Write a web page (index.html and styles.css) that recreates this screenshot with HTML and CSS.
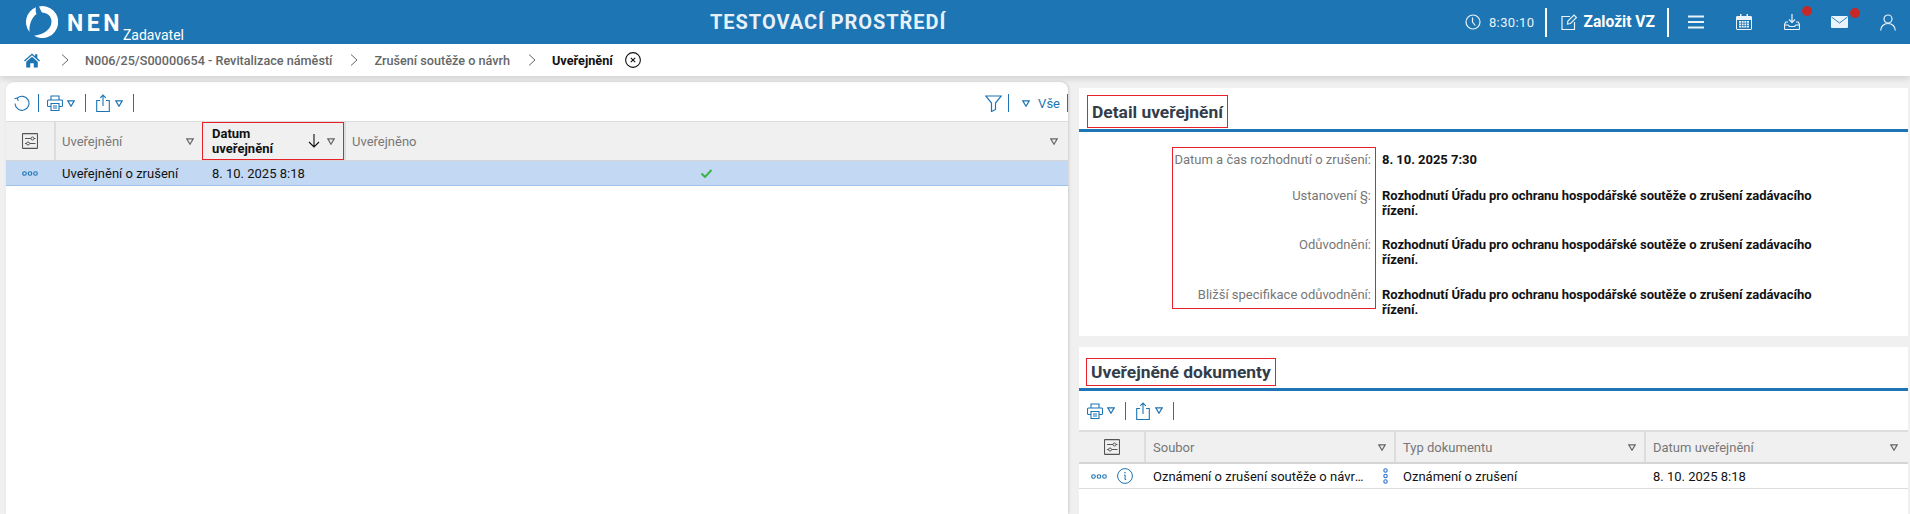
FILE: index.html
```html
<!DOCTYPE html>
<html lang="cs">
<head>
<meta charset="utf-8">
<title>NEN</title>
<link rel="stylesheet" href="styles.css">
</head>
<body>
<svg class="defs" width="0" height="0" aria-hidden="true">
  <defs>
    <symbol id="tri" viewBox="0 0 8 7"><path d="M.8.8h6.400L4 6.200z" fill="none" stroke="currentColor" stroke-width="1.200"/></symbol>
    <symbol id="printer" viewBox="0 0 16 16"><path d="M4 5V1h8v4M4 11.500H1.500a1 1 0 0 1-1-1V6a1 1 0 0 1 1-1h13a1 1 0 0 1 1 1v4.500a1 1 0 0 1-1 1H12M4 8.500h8V15.500H4zM6 11h4M6 13h4" fill="none" stroke="currentColor" stroke-width="1.100"/></symbol>
    <symbol id="share" viewBox="0 0 14 18"><path d="M4 6.500H.7v11h12.600v-11H10M7 12V1M4.200 3.800 7 1l2.800 2.800" fill="none" stroke="currentColor" stroke-width="1.100"/></symbol>
    <symbol id="settings" viewBox="0 0 16 16"><path d="M1 .6h14a.5.5 0 0 1 .5.500v13.800a.5.5 0 0 1-.5.500H1a.5.5 0 0 1-.5-.5V1.100A.5.5 0 0 1 1 .6zM3 5.500h6M12 5.500h1.500M3 10.500h1.500M8 10.500h5.500" fill="none" stroke="currentColor" stroke-width="1.100"/><circle cx="10.500" cy="5.500" r="1.500" fill="none" stroke="currentColor"/><circle cx="6" cy="10.500" r="1.500" fill="none" stroke="currentColor"/></symbol>
    <symbol id="dots" viewBox="0 0 16 5"><g fill="none" stroke="currentColor" stroke-width="1.100"><circle cx="2.500" cy="2.500" r="1.800"/><circle cx="8" cy="2.500" r="1.800"/><circle cx="13.500" cy="2.500" r="1.800"/></g></symbol>
    <symbol id="chev" viewBox="0 0 8 12"><path d="M1 .5 7 6l-6 5.500" fill="none" stroke="currentColor" stroke-width="1"/></symbol>
  </defs>
</svg>

<header class="topbar">
  <div class="brand">
    <svg class="logo" viewBox="0 0 32 32" aria-hidden="true">
      <path d="M13 .4A16 16 0 1 1 8 29.800C15 29 25 25 25.500 16 25.500 10 21 6.500 16 6.500 14.500 4 13.800 2 13 .4z" fill="#fff"/>
      <path d="M10 1.200A16 16 0 0 0 3.500 26C3 20 5 12 10.500 8 9.500 6 9.500 3 10 1.200z" fill="#fff"/>
    </svg>
    <span class="brand-name">NEN</span>
    <span class="brand-role">Zadavatel</span>
  </div>
  <div class="env">TESTOVACÍ PROSTŘEDÍ</div>
  <div class="top-tools">
    <svg class="ico-clock" viewBox="0 0 16 16" aria-hidden="true"><circle cx="8" cy="8" r="7" fill="none" stroke="currentColor" stroke-width="1.200"/><path d="M7.500 3.500V8l2.800 3.500" fill="none" stroke="currentColor" stroke-width="1.200"/></svg>
    <span class="clock">8:30:10</span>
    <span class="top-sep sep-left"></span>
    <svg class="ico-edit" viewBox="0 0 16 16" aria-hidden="true"><path d="M9 2.500H1v13h12.500V8M6.500 10l.4-3L13 1l2.500 2.500L9.500 9.500z" fill="none" stroke="currentColor" stroke-width="1.200"/></svg>
    <span class="found">Založit VZ</span>
    <span class="top-sep sep-right"></span>
    <svg class="ico-burger" viewBox="0 0 16 14" aria-hidden="true"><path d="M0 1.500h16M0 7h16M0 12.500h16" stroke="currentColor" stroke-width="2"/></svg>
    <svg class="ico-cal" viewBox="0 0 16 16" aria-hidden="true"><path d="M1 2.500h14a.5.5 0 0 1 .5.500v12a.5.5 0 0 1-.5.500H1a.5.5 0 0 1-.5-.5V3A.5.5 0 0 1 1 2.500z" fill="none" stroke="currentColor"/><path d="M.5 2.500h15V6H.5zM4 0h1.500v3H4zM10.500 0H12v3h-1.500z" fill="currentColor"/><path d="M3 7h10v6.500H3z" fill="currentColor"/><path d="M5.500 7v6.500M8 7v6.500M10.500 7v6.500M3 9.200h10M3 11.400h10" stroke="#1d75b4" stroke-width=".7"/></svg>
    <span class="notif">
      <svg class="ico-inbox" viewBox="0 0 16 16" aria-hidden="true"><path d="M8 0v8M5 5.500 8 8.500l3-3M4 8H1.700L.5 10.500v4a1 1 0 0 0 1 1h13a1 1 0 0 0 1-1v-4L14.300 8H12M.5 11h3.500l1.500 1.500h5L12 11h3.500" fill="none" stroke="currentColor" stroke-width="1.200"/></svg>
      <span class="dot"></span>
    </span>
    <span class="notif notif-mail">
      <svg class="ico-mail" viewBox="0 0 17 12" aria-hidden="true"><rect width="17" height="12" rx="1" fill="currentColor"/><path d="M.5 1 8.500 7 16.500 1" fill="none" stroke="#1d75b4" stroke-width=".9"/></svg>
      <span class="dot"></span>
    </span>
    <svg class="ico-user" viewBox="0 0 16 17" aria-hidden="true"><circle cx="8" cy="5" r="4" fill="none" stroke="currentColor" stroke-width="1.200"/><path d="M.7 16.500c0-4 3-7 7.300-7s7.300 3 7.300 7" fill="none" stroke="currentColor" stroke-width="1.200"/></svg>
  </div>
</header>

<nav class="crumbs">
  <svg class="home" viewBox="0 0 18 16" aria-hidden="true"><path d="M9 0 0 8l1 1 8-7 8 7 1-1-3-2.700V1h-2.500v2.100z" fill="#1d75b4"/><path d="M2.500 9.500 9 3.800l6.500 5.700V16H11v-5H7v5H2.500z" fill="#1d75b4"/></svg>
  <svg class="chev chev-first"><use href="#chev"/></svg>
  <a class="crumb">N006/25/S00000654 - Revitalizace náměstí</a>
  <svg class="chev"><use href="#chev"/></svg>
  <a class="crumb">Zrušení soutěže o návrh</a>
  <svg class="chev"><use href="#chev"/></svg>
  <strong class="crumb-now">Uveřejnění</strong>
  <svg class="close" viewBox="0 0 16 16" aria-hidden="true"><circle cx="8" cy="8" r="7.400" fill="none" stroke="#111" stroke-width="1.100"/><path d="m5.800 5.800 4.400 4.400m0-4.400-4.400 4.400" stroke="#111" stroke-width="1.100"/></svg>
</nav>

<main class="page">
  <section class="left">
    <div class="toolbar toolbar-left">
      <svg class="t-refresh" viewBox="0 0 16 16" aria-hidden="true"><path d="M3.200 3.200A7 7 0 1 1 1 8.500M.5 3.800l2.800-.8 1 2.900" fill="none" stroke="currentColor" stroke-width="1.100"/></svg>
      <span class="t-sep"></span>
      <svg class="t-print"><use href="#printer"/></svg>
      <svg class="tri"><use href="#tri"/></svg>
      <span class="t-sep"></span>
      <svg class="t-share"><use href="#share"/></svg>
      <svg class="tri"><use href="#tri"/></svg>
      <span class="t-sep"></span>
      <span class="spacer"></span>
      <svg class="t-filter" viewBox="0 0 17 17" aria-hidden="true"><path d="M.7 1h15.600l-5.800 7v6.500l-4 2V8z" fill="none" stroke="currentColor" stroke-width="1.200"/></svg>
      <span class="t-sep"></span>
      <svg class="tri tri-all"><use href="#tri"/></svg>
      <span class="all">Vše</span>
      <span class="t-sep"></span>
    </div>
    <div class="thead thead-left">
      <div class="th th-icon"><svg class="settings"><use href="#settings"/></svg></div>
      <div class="th"><span>Uveřejnění</span><svg class="tri th-tri"><use href="#tri"/></svg></div>
      <div class="th th-sorted">
        <span class="sorted-label">Datum<br>uveřejnění</span>
        <svg class="sort" viewBox="0 0 12 14" aria-hidden="true"><path d="M6 0v13M1 8l5 5 5-5" fill="none" stroke="#111" stroke-width="1.100"/></svg>
        <svg class="tri th-tri-sorted"><use href="#tri"/></svg>
      </div>
      <div class="th th-last"><span>Uveřejněno</span><svg class="tri th-tri"><use href="#tri"/></svg></div>
    </div>
    <div class="row row-left">
      <div class="cell cell-dots"><svg class="dots"><use href="#dots"/></svg></div>
      <div class="cell">Uveřejnění o zrušení</div>
      <div class="cell">8. 10. 2025 8:18</div>
      <div class="cell cell-check"><svg class="check" viewBox="0 0 11 9" aria-hidden="true"><path d="M.5 4.500 4 8l6.500-7" fill="none" stroke="#3bb54a" stroke-width="2"/></svg></div>
    </div>
  </section>

  <div class="right">
    <section class="card card-detail">
      <div class="card-head"><h2 class="card-title">Detail uveřejnění</h2></div>
      <div class="form">
        <div class="form-mark"></div>
        <div class="f-label">Datum a čas rozhodnutí o zrušení:</div>
        <div class="f-value">8. 10. 2025 7:30</div>
        <div class="f-label">Ustanovení §:</div>
        <div class="f-value">Rozhodnutí Úřadu pro ochranu hospodářské soutěže o zrušení zadávacího řízení.</div>
        <div class="f-label">Odůvodnění:</div>
        <div class="f-value">Rozhodnutí Úřadu pro ochranu hospodářské soutěže o zrušení zadávacího řízení.</div>
        <div class="f-label">Bližší specifikace odůvodnění:</div>
        <div class="f-value">Rozhodnutí Úřadu pro ochranu hospodářské soutěže o zrušení zadávacího řízení.</div>
      </div>
    </section>

    <section class="card card-docs">
      <div class="card-head card-head-docs"><h2 class="card-title title-docs">Uveřejněné dokumenty</h2></div>
      <div class="toolbar toolbar-docs">
        <svg class="t-print"><use href="#printer"/></svg>
        <svg class="tri"><use href="#tri"/></svg>
        <span class="t-sep"></span>
        <svg class="t-share"><use href="#share"/></svg>
        <svg class="tri"><use href="#tri"/></svg>
        <span class="t-sep"></span>
      </div>
      <div class="thead thead-docs">
        <div class="th th-icon"><svg class="settings"><use href="#settings"/></svg></div>
        <div class="th"><span>Soubor</span><svg class="tri th-tri"><use href="#tri"/></svg></div>
        <div class="th"><span>Typ dokumentu</span><svg class="tri th-tri"><use href="#tri"/></svg></div>
        <div class="th th-last"><span>Datum uveřejnění</span><svg class="tri th-tri"><use href="#tri"/></svg></div>
      </div>
      <div class="row row-docs">
        <div class="cell cell-actions">
          <svg class="dots"><use href="#dots"/></svg>
          <svg class="info" viewBox="0 0 16 16" aria-hidden="true"><circle cx="8" cy="8" r="7.400" fill="none" stroke="currentColor" stroke-width="1"/><circle cx="8" cy="4.800" r=".8" fill="currentColor"/><path d="M7 7.200h1.200L8 11.500h1.200" fill="none" stroke="currentColor" stroke-width="1"/></svg>
        </div>
        <div class="cell cell-file"><span class="file-name">Oznámení o zrušení soutěže o návrhu</span><svg class="kebab" viewBox="0 0 5 16" aria-hidden="true"><g fill="none" stroke="#2f74c9" stroke-width="1.100"><circle cx="2.500" cy="2.500" r="1.700"/><circle cx="2.500" cy="8" r="1.700"/><circle cx="2.500" cy="13.500" r="1.700"/></g></svg></div>
        <div class="cell">Oznámení o zrušení</div>
        <div class="cell">8. 10. 2025 8:18</div>
      </div>
    </section>
  </div>
</main>
</body>
</html>
```
FILE: styles.css
```css
* { box-sizing: border-box; }
html, body { margin: 0; height: 514px; overflow: hidden; }
body { background: #f0f0f0; font-family: Roboto, "Liberation Sans", sans-serif; font-size: 13px; color: #111; }
svg { display: block; flex: none; }
.defs { position: absolute; }

.topbar { height: 44px; background: #1d75b4; color: #fff; display: grid; grid-template-columns: 710px auto 1fr; align-items: center; }
.brand { display: flex; align-items: flex-start; padding-left: 26px; height: 44px; }
.logo { width: 32px; height: 32px; margin-top: 6px; }
.brand-name { margin: 10px 0 0 9px; font-size: 23px; line-height: 27px; font-weight: 700; letter-spacing: 3.5px; }
.brand-role { margin: 27px 0 0 0; font-size: 14px; line-height: 16px; }
.env { font-size: 20px; font-weight: 700; letter-spacing: .95px; color: #e8f1f7; }
.top-tools { display: flex; align-items: center; justify-content: flex-end; padding-right: 14px; color: #eaf3f9; }
.ico-clock { width: 16px; height: 16px; margin-right: 8px; }
.clock { font-size: 13px; letter-spacing: .4px; }
.top-sep { width: 2px; height: 29px; background: #fff; margin: 0 12px; }
.sep-left { margin: 0 14px 0 10px; }
.ico-edit { width: 16px; height: 16px; margin-right: 7px; }
.found { font-size: 15.600px; font-weight: 700; color: #fff; }
.sep-right { margin-right: 19px; }
.ico-burger { width: 16px; height: 14px; margin-right: 32px; }
.ico-cal { width: 16px; height: 16px; margin-right: 32px; }
.notif { position: relative; display: block; margin-right: 31px; }
.notif-mail { margin-right: 32px; }
.ico-inbox { width: 16px; height: 16px; }
.ico-mail { width: 17px; height: 12px; }
.dot { position: absolute; right: -12px; top: -8px; width: 10px; height: 10px; border-radius: 50%; background: #c62828; }
.ico-user { width: 16px; height: 17px; }

.crumbs { height: 32px; background: #fff; display: flex; align-items: center; padding-left: 24px; box-shadow: 0 3px 6px rgba(0,0,0,.12); position: relative; color: #666; }
.home { width: 16px; height: 15px; margin-right: 21px; }
.chev { width: 8px; height: 12px; color: #666; margin-right: 16px; }
.crumb { font-size: 12.650px; font-weight: 500; color: #666; margin-right: 18px; }
.crumb-now { font-size: 12.700px; font-weight: 700; color: #111; margin-right: 12px; }
.close { width: 16px; height: 16px; }

.page { display: grid; grid-template-columns: 1062px 829px; column-gap: 11px; padding: 6px 0 0 6px; height: 438px; }
.left { background: #fff; border-radius: 8px 8px 0 0; box-shadow: 1px 0 3px rgba(0,0,0,.15); }
.right { padding-top: 6px; display: flex; flex-direction: column; gap: 11px; min-width: 0; }

.toolbar { display: flex; align-items: center; color: #1d75b4; }
.toolbar-left { height: 39px; padding-left: 8px; padding-top: 3px; }
.toolbar-docs { height: 39px; padding-left: 8px; }
.t-refresh { width: 16px; height: 16px; margin-right: 8px; }
.t-sep { width: 1px; height: 18px; background: #1d75b4; margin-left: 10px; margin-right: 10px; }
.t-refresh + .t-sep { margin-left: 0; margin-right: 8px; }
.t-print { width: 16px; height: 16px; margin-right: 4px; }
.t-share { width: 14px; height: 18px; margin-right: 5px; }
.tri { width: 8px; height: 7px; color: #1d75b4; }
.spacer { flex: 1; }
.t-filter { width: 17px; height: 17px; margin-right: 6px; }
.t-filter + .t-sep { margin: 0 13px 0 0; }
.tri-all { margin-right: 8px; }
.all { font-size: 13px; color: #1d75b4; }
.all + .t-sep { margin: 0 0 0 7px; }

.thead { display: grid; background: #f0f0f0; border-top: 1px solid #ddd; border-bottom: 1px solid #d5d5d5; }
.thead-left { grid-template-columns: 48px 148px 142px 1fr; height: 40px; }
.thead-docs { grid-template-columns: 65px 250px 250px 1fr; height: 34px; border-top-width: 2px; border-bottom-width: 2px; }
.th { display: flex; align-items: center; justify-content: space-between; padding: 0 8px 0 6px; color: #777; font-size: 13px; border-left: 2px solid #ddd; }
.thead-docs .th { padding-left: 7px; }
.thead-docs .th-icon { padding: 0; }
.th-icon { justify-content: center; border-left: 0; padding: 0; color: #555; }
.th-last { padding-right: 10px; }
.th-tri { color: #666; }
.settings { width: 16px; height: 16px; color: #555; }
.th-sorted { outline: 1px solid #e8202a; outline-offset: -1px; border-left: 0; padding: 0 9px 0 10px; color: #111; font-weight: 700; line-height: 15px; background: #f0f0f0; }
.sorted-label { flex: 1; }
.sort { width: 12px; height: 14px; margin-right: 7px; }
.th-tri-sorted { color: #666; }

.row { display: grid; align-items: center; font-size: 13px; }
.row-left { grid-template-columns: 48px 148px 142px 1fr; height: 25px; background: #c2d8f3; border-bottom: 1px solid #9cc2e8; }
.row-docs { grid-template-columns: 65px 250px 250px 1fr; height: 25px; border-bottom: 1px solid #ddd; }
.row-left .cell { padding-left: 8px; }
.row-left .cell-dots { padding-left: 16px; }
.row-left .cell:nth-child(3) { padding-left: 10px; }
.row-docs .cell { padding-left: 9px; }
.dots { width: 16px; height: 5px; color: #1d75b4; }
.row-left .cell-check { padding-left: 357px; }
.check { width: 11px; height: 9px; }
.row-docs .cell-actions { display: flex; align-items: center; padding-left: 12px; gap: 10px; color: #1d75b4; }
.info { width: 16px; height: 16px; }
.row-docs .cell-file { display: flex; align-items: center; padding-right: 6px; }
.file-name { flex: 1; min-width: 0; white-space: nowrap; overflow: hidden; text-overflow: ellipsis; margin-right: 18px; }
.kebab { width: 5px; height: 16px; }

.card { background: #fff; }
.card-detail { height: 248px; }
.card-docs { flex: 1; }
.card-head { height: 44px; border-bottom: 3px solid #1d75b4; padding: 7px 0 0 8px; }
.card-head-docs { padding: 11px 0 0 7px; }
.card-title { display: inline-block; margin: 0; height: 33px; padding: 0 4px; border: 1px solid #e8202a; font-size: 17.400px; line-height: 33px; font-weight: 700; color: #333d4a; }
.title-docs { height: 28px; line-height: 27px; }

.form { position: relative; display: grid; grid-template-columns: 292px 450px; grid-template-rows: 36px 49px 50px 26px; column-gap: 11px; padding: 15px 0 0 0; font-size: 13px; line-height: 15px; }
.form-mark { position: absolute; left: 93px; top: 15px; width: 204px; height: 162px; border: 1px solid #e8202a; }
.f-label { text-align: right; color: #777; padding-top: 5px; }
.f-value { font-weight: 700; color: #111; padding-top: 5px; letter-spacing: -.04px; }
```
